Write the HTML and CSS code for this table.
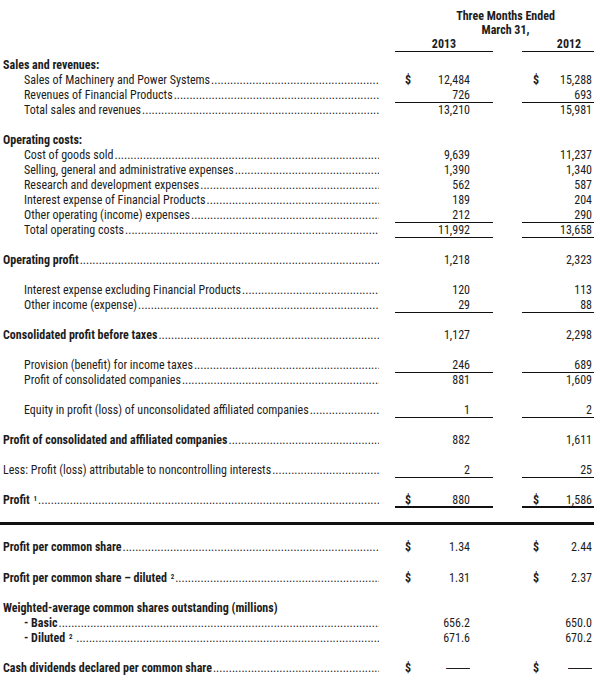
FILE: index.html
```html
<!DOCTYPE html>
<html lang="en">

<head>
    <meta charset="UTF-8">
    <meta name="viewport" content="width=device-width, initial-scale=1.0">
    <title>Consolidated Results of Operations</title>
    <link rel="stylesheet" href="styles.css">
</head>

<body>

    <div class="sheet">
        <table class="statement">
            <colgroup>
                <col class="c-label">
                <col class="c-cur">
                <col class="c-num">
                <col class="c-gap">
                <col class="c-cur">
                <col class="c-num2">
            </colgroup>
            <thead>
                <tr class="head">
                    <td></td>
                    <td colspan="5">Three Months Ended</td>
                </tr>
                <tr class="head">
                    <td></td>
                    <td colspan="5">March 31,</td>
                </tr>
                <tr class="head years">
                    <td></td>
                    <td colspan="2" class="ul">2013</td>
                    <td></td>
                    <td colspan="2" class="ul">2012</td>
                </tr>
            </thead>
            <tbody>
                <tr class="first b">
                    <td class="label">Sales and revenues:</td>
                    <td></td><td></td><td></td><td></td><td></td>
                </tr>
                <tr>
                    <td class="label ind"><span class="lead">Sales of Machinery and Power Systems</span></td>
                    <td class="cur">$</td><td class="num">12,484</td><td></td>
                    <td class="cur cur2">$</td><td class="num num2">15,288</td>
                </tr>
                <tr class="ul">
                    <td class="label ind"><span class="lead">Revenues of Financial Products</span></td>
                    <td class="cur"></td><td class="num">726</td><td class="gap"></td>
                    <td class="cur cur2"></td><td class="num num2">693</td>
                </tr>
                <tr>
                    <td class="label ind"><span class="lead">Total sales and revenues </span></td>
                    <td class="cur"></td><td class="num">13,210</td><td></td>
                    <td class="cur cur2"></td><td class="num num2">15,981</td>
                </tr>

                <tr class="sp b">
                    <td class="label">Operating costs:</td>
                    <td></td><td></td><td></td><td></td><td></td>
                </tr>
                <tr>
                    <td class="label ind"><span class="lead">Cost of goods sold</span></td>
                    <td class="cur"></td><td class="num">9,639</td><td></td>
                    <td class="cur cur2"></td><td class="num num2">11,237</td>
                </tr>
                <tr>
                    <td class="label ind"><span class="lead">Selling, general and administrative expenses</span></td>
                    <td class="cur"></td><td class="num">1,390</td><td></td>
                    <td class="cur cur2"></td><td class="num num2">1,340</td>
                </tr>
                <tr>
                    <td class="label ind"><span class="lead">Research and development expenses </span></td>
                    <td class="cur"></td><td class="num">562</td><td></td>
                    <td class="cur cur2"></td><td class="num num2">587</td>
                </tr>
                <tr>
                    <td class="label ind"><span class="lead">Interest expense of Financial Products </span></td>
                    <td class="cur"></td><td class="num">189</td><td></td>
                    <td class="cur cur2"></td><td class="num num2">204</td>
                </tr>
                <tr class="ul">
                    <td class="label ind"><span class="lead">Other operating (income) expenses </span></td>
                    <td class="cur"></td><td class="num">212</td><td class="gap"></td>
                    <td class="cur cur2"></td><td class="num num2">290</td>
                </tr>
                <tr class="ul">
                    <td class="label ind"><span class="lead">Total operating costs</span></td>
                    <td class="cur"></td><td class="num">11,992</td><td class="gap"></td>
                    <td class="cur cur2"></td><td class="num num2">13,658</td>
                </tr>

                <tr class="sp b">
                    <td class="label"><span class="lead">Operating profit</span></td>
                    <td class="cur"></td><td class="num">1,218</td><td></td>
                    <td class="cur cur2"></td><td class="num num2">2,323</td>
                </tr>

                <tr class="sp">
                    <td class="label ind"><span class="lead">Interest expense excluding Financial Products</span></td>
                    <td class="cur"></td><td class="num">120</td><td></td>
                    <td class="cur cur2"></td><td class="num num2">113</td>
                </tr>
                <tr class="ul">
                    <td class="label ind"><span class="lead">Other income (expense)</span></td>
                    <td class="cur"></td><td class="num">29</td><td class="gap"></td>
                    <td class="cur cur2"></td><td class="num num2">88</td>
                </tr>

                <tr class="sp b">
                    <td class="label"><span class="lead">Consolidated profit before taxes </span></td>
                    <td class="cur"></td><td class="num">1,127</td><td></td>
                    <td class="cur cur2"></td><td class="num num2">2,298</td>
                </tr>

                <tr class="sp ul">
                    <td class="label ind"><span class="lead">Provision (benefit) for income taxes</span></td>
                    <td class="cur"></td><td class="num">246</td><td class="gap"></td>
                    <td class="cur cur2"></td><td class="num num2">689</td>
                </tr>
                <tr>
                    <td class="label ind"><span class="lead">Profit of consolidated companies </span></td>
                    <td class="cur"></td><td class="num">881</td><td></td>
                    <td class="cur cur2"></td><td class="num num2">1,609</td>
                </tr>

                <tr class="sp ul">
                    <td class="label ind"><span class="lead">Equity in profit (loss) of unconsolidated affiliated companies</span></td>
                    <td class="cur"></td><td class="num">1</td><td class="gap"></td>
                    <td class="cur cur2"></td><td class="num num2">2</td>
                </tr>

                <tr class="sp b">
                    <td class="label"><span class="lead">Profit of consolidated and affiliated companies </span></td>
                    <td class="cur"></td><td class="num">882</td><td></td>
                    <td class="cur cur2"></td><td class="num num2">1,611</td>
                </tr>

                <tr class="sp ul">
                    <td class="label"><span class="lead">Less: Profit (loss) attributable to noncontrolling interests</span></td>
                    <td class="cur"></td><td class="num">2</td><td class="gap"></td>
                    <td class="cur cur2"></td><td class="num num2">25</td>
                </tr>

                <tr class="sp b ul2">
                    <td class="label"><span class="lead"><span>Profit <sup class="fn">1</sup></span></span></td>
                    <td class="cur">$</td><td class="num">880</td><td class="gap"></td>
                    <td class="cur cur2">$</td><td class="num num2">1,586</td>
                </tr>

                <tr class="rule">
                    <td colspan="6"><div class="rule-line"></div></td>
                </tr>

                <tr class="sp b">
                    <td class="label"><span class="lead">Profit per common share</span></td>
                    <td class="cur">$</td><td class="num">1.34</td><td></td>
                    <td class="cur cur2">$</td><td class="num num2">2.44</td>
                </tr>

                <tr class="sp b late">
                    <td class="label"><span class="lead"><span>Profit per common share – diluted <sup class="fn">2</sup></span></span></td>
                    <td class="cur">$</td><td class="num">1.31</td><td></td>
                    <td class="cur cur2">$</td><td class="num num2">2.37</td>
                </tr>

                <tr class="sp b">
                    <td class="label">Weighted-average common shares outstanding (millions)</td>
                    <td></td><td></td><td></td><td></td><td></td>
                </tr>
                <tr class="b">
                    <td class="label ind"><span class="lead">- Basic </span></td>
                    <td class="cur"></td><td class="num">656.2</td><td></td>
                    <td class="cur cur2"></td><td class="num num2">650.0</td>
                </tr>
                <tr class="b">
                    <td class="label ind"><span class="lead"><span>- Diluted <sup class="fn">2</sup>&nbsp;</span></span></td>
                    <td class="cur"></td><td class="num">671.6</td><td></td>
                    <td class="cur cur2"></td><td class="num num2">670.2</td>
                </tr>

                <tr class="sp b">
                    <td class="label"><span class="lead">Cash dividends declared per common share</span></td>
                    <td class="cur">$</td><td class="num"><span class="nil">—</span></td><td></td>
                    <td class="cur cur2">$</td><td class="num num2"><span class="nil">—</span></td>
                </tr>
            </tbody>
        </table>
    </div>

</body>

</html>
```

FILE: styles.css
```css
body {
    margin: 0;
    background-color: #fff;
    color: #1c1c1c;
    font-family: "Roboto Condensed", "Liberation Sans", sans-serif;
    font-size: 12px;
}

.sheet {
    width: 594px;
    overflow: hidden;
}

.statement {
    width: 616px;
    margin-top: 9px;
    table-layout: fixed;
    border-collapse: collapse;
}

.c-label {
    width: 395px;
}

.c-cur {
    width: 25px;
}

.c-num {
    width: 73px;
}

.c-gap {
    width: 29px;
}

.c-num2 {
    width: 69px;
}

.statement td {
    padding: 0;
    line-height: 15px;
    white-space: nowrap;
    vertical-align: bottom;
}

/* header */
.statement .head td {
    font-weight: bold;
    text-align: center;
    line-height: 14px;
}

.statement .years td {
    padding-bottom: 1px;
}

.head .ul {
    background: linear-gradient(#111, #111) bottom / 100% 1px no-repeat;
}

/* row spacing */
.statement .first td {
    padding-top: 6px;
}

.statement .sp td {
    padding-top: 15px;
}

.statement .late td {
    padding-top: 16px;
}

/* labels */
.statement td.label {
    padding-left: 3px;
    padding-right: 16px;
}

.statement td.ind {
    padding-left: 24px;
}

.b .label {
    font-weight: bold;
}

.lead {
    display: flex;
}

.lead::after {
    content: "................................................................................................................................................................................................";
    flex: 1;
    overflow: hidden;
    font-weight: normal;
    padding-left: 1px;
}

.fn {
    font-size: 7px;
    line-height: 0;
    vertical-align: 3px;
    margin-left: 1px;
}

/* numbers */
.statement td.cur {
    padding-left: 10px;
    font-weight: bold;
}

.statement td.cur2 {
    padding-left: 11px;
}

.statement td.num {
    text-align: right;
    padding-right: 23px;
}

.statement td.num2 {
    padding-right: 24px;
}

.nil {
    display: inline-block;
    font-family: "Liberation Sans", sans-serif;
    transform: scaleX(2);
    transform-origin: right center;
}

.ul .cur,
.ul .num {
    background: linear-gradient(#111, #111) bottom / 100% 1px no-repeat;
}

.ul2 .cur,
.ul2 .num {
    background: linear-gradient(#111, #111) bottom / 100% 2px no-repeat;
}

/* heavy rule under profit */
.statement .rule td {
    padding-top: 14px;
    line-height: 0;
    font-size: 0;
}

.rule-line {
    height: 3px;
    background-color: #111;
}
```
